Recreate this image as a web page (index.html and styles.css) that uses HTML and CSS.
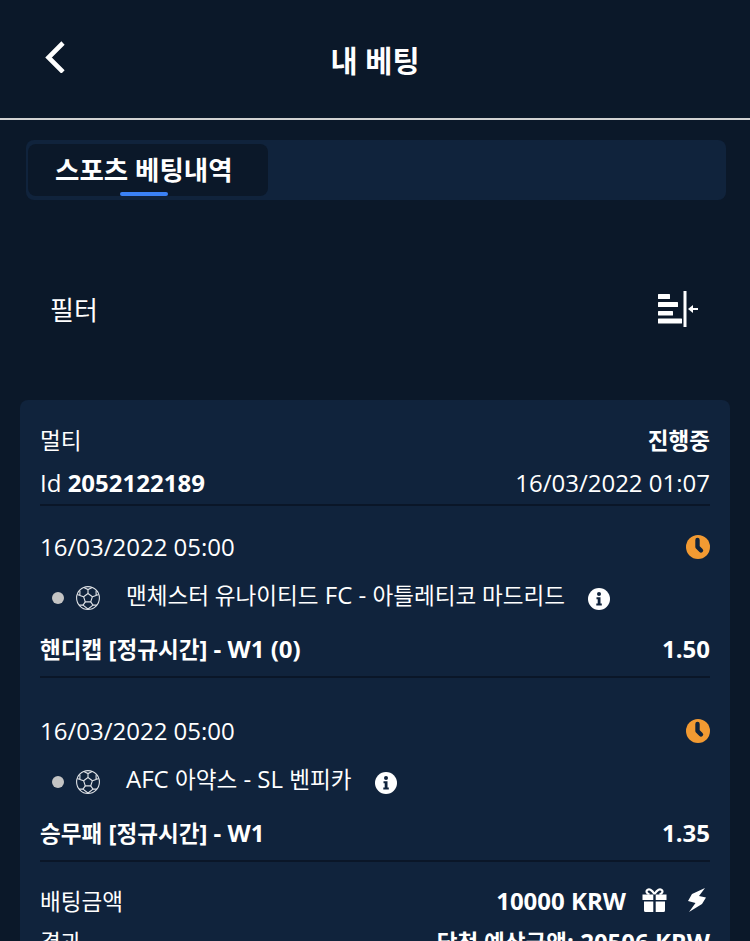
FILE: index.html
```html
<!DOCTYPE html>
<html lang="ko">

<head>
    <meta charset="UTF-8">
    <meta name="viewport" content="width=device-width, initial-scale=1.0">
    <title>내 베팅</title>
    <link rel="stylesheet" href="styles.css">
</head>

<body>
    <svg class="svg-defs" width="0" height="0">
        <symbol id="ball" viewBox="0 0 24 24">
            <g fill="none" stroke="#dfe2e6" stroke-width="1.100">
                <circle cx="12" cy="12" r="11.400"/>
                <path d="M12 7.500l4.400 3.200-1.700 5.200H9.300l-1.700-5.200z"/>
                <path d="M12 7.500V3.600M16.400 10.700l3.700-1.200M14.700 15.900l2.300 3.200M9.300 15.900L7 19.100M7.600 10.700L3.900 9.500"/>
                <path d="M7.800 1.600L12 3.600l4.200-2M20.100 9.500l2.600-.9M20.100 4.600v4.900M17 19.100l-4.900 3.900M17 19.100h4M7 19.100l4.900 3.900M7 19.100H3M3.900 9.500V4.600M3.900 9.500l-2.600-.9"/>
            </g>
        </symbol>
        <symbol id="clock" viewBox="0 0 24 24">
            <circle cx="12" cy="12" r="12" fill="#f29a32"/>
            <path d="M11.500 5v7l3.500 3.500" fill="none" stroke="#10233c" stroke-width="4.400" stroke-linecap="round" stroke-linejoin="round"/>
        </symbol>
        <symbol id="info" viewBox="0 0 22 22">
            <circle cx="11" cy="11" r="11" fill="#fff"/>
            <circle cx="11" cy="6" r="2" fill="#10233c"/>
            <path d="M8.500 9.200h4v6.200h1.300v2H8.300v-2h1.400v-4.200H8.500z" fill="#10233c"/>
        </symbol>
    </svg>

    <header class="topbar">
        <svg class="back-icon" viewBox="0 0 20 32" width="20" height="32">
            <path d="M18 2L3.500 16.500 18 31" fill="none" stroke="#fff" stroke-width="4.600"/>
        </svg>
        <h1 class="page-title">내 베팅</h1>
    </header>

    <div class="tabs">
        <div class="tab active">스포츠 베팅내역</div>
    </div>

    <div class="filter-row">
        <span>필터</span>
        <svg class="filter-icon" viewBox="0 0 40 36" width="40" height="36">
            <g fill="#fff">
                <rect x="0" y="3" width="12" height="5" rx="0.500"/>
                <rect x="0" y="11" width="20" height="5" rx="0.500"/>
                <rect x="0" y="20" width="15" height="4.500" rx="0.500"/>
                <rect x="0" y="27.500" width="24" height="5" rx="0.500"/>
                <rect x="25.500" y="0" width="3" height="36"/>
                <rect x="33" y="17" width="7" height="2"/>
                <path d="M30 18l5-4v8z"/>
            </g>
        </svg>
    </div>

    <section class="bet-card">
        <div class="row row-type">
            <span class="ko">멀티</span>
            <b class="ko">진행중</b>
        </div>
        <div class="row row-id">
            <span>Id <b>2052122189</b></span>
            <span>16/03/2022 01:07</span>
        </div>

        <div class="event">
            <div class="row event-date">
                <span>16/03/2022 05:00</span>
                <svg class="clock-icon"><use href="#clock"/></svg>
            </div>
            <div class="event-match">
                <i class="dot"></i>
                <svg class="ball-icon"><use href="#ball"/></svg>
                <span class="match-name"><span class="ko">맨체스터 유나이티드</span> FC - <span class="ko">아틀레티코 마드리드</span></span>
                <svg class="info-icon"><use href="#info"/></svg>
            </div>
            <div class="row event-market">
                <b><span class="ko">핸디캡</span> [<span class="ko">정규시간</span>] - W1 (0)</b>
                <b>1.50</b>
            </div>
        </div>

        <div class="event">
            <div class="row event-date">
                <span>16/03/2022 05:00</span>
                <svg class="clock-icon"><use href="#clock"/></svg>
            </div>
            <div class="event-match">
                <i class="dot"></i>
                <svg class="ball-icon"><use href="#ball"/></svg>
                <span class="match-name">AFC <span class="ko">아약스</span> - SL <span class="ko">벤피카</span></span>
                <svg class="info-icon"><use href="#info"/></svg>
            </div>
            <div class="row event-market">
                <b><span class="ko">승무패</span> [<span class="ko">정규시간</span>] - W1</b>
                <b>1.35</b>
            </div>
        </div>

        <div class="row row-stake">
            <span class="ko">배팅금액</span>
            <span class="stake-value">
                <b>10000 KRW</b>
                <svg class="gift-icon" viewBox="0 0 24 24" width="25" height="24">
                    <path fill="#fff" d="M0 6.500h10.800V12H0zM13.200 6.500H24V12H13.200zM1.500 13.500h9.300V24H3a1.500 1.500 0 0 1-1.500-1.500zM13.200 13.500h9.300v9A1.500 1.500 0 0 1 21 24h-7.800z"/>
                    <path fill="none" stroke="#fff" stroke-width="2.200" d="M12 6C9 1 6.500 0.800 5 1.800 3.300 3 4 6 7 6M12 6c3-5 5.500-5.200 7-4.200 1.700 1.200 1 4.200-2 4.200"/>
                </svg>
                <svg class="bolt-icon" viewBox="0 0 18 24" width="18" height="24">
                    <path fill="#fff" d="M17 0L4 6 0 13l7.500 2L1 24l13-8 4-6.500L11 8z"/>
                </svg>
            </span>
        </div>
        <div class="row row-result">
            <span class="ko">결과</span>
            <b><span class="ko">당첨 예상금액</span>: 20506 KRW</b>
        </div>
    </section>
</body>
</html>
```

FILE: styles.css
```css
* {
    box-sizing: border-box;
}

body {
    margin: 0;
    height: 941px;
    overflow: hidden;
    background-color: #0b1829;
    color: #fff;
    font-family: "Open Sans", "Noto Sans CJK KR", sans-serif;
    font-size: 24px;
}

b {
    font-weight: 700;
}

/* hangul in the original runs narrower than Noto, so it gets scaled down */
.ko {
    font-size: 0.94em;
}

.svg-defs {
    display: block;
    height: 0;
}

.topbar {
    display: flex;
    align-items: center;
    justify-content: center;
    position: relative;
    height: 120px;
    border-bottom: 2px solid #d2d2d2;
}

.page-title {
    margin: 0;
    font-size: 29.5px;
    font-weight: 700;
}

.back-icon {
    position: absolute;
    left: 45px;
    top: 41px;
}

.tabs {
    margin: 20px 24px 0 26px;
    height: 60px;
    padding: 4px 2px;
    background-color: #10233c;
    border-radius: 8px;
}

.tab {
    position: relative;
    width: 240px;
    height: 52px;
    padding-left: 27px;
    line-height: 52px;
    font-size: 26.500px;
    font-weight: 700;
}

.tab.active {
    background-color: #0b1829;
    border-radius: 8px;
}

.tab.active::after {
    content: "";
    position: absolute;
    left: 92px;
    bottom: 0;
    width: 48px;
    height: 4px;
    border-radius: 2px;
    background-color: #3b82f6;
}

.filter-row {
    display: flex;
    justify-content: space-between;
    align-items: center;
    height: 200px;
    padding: 17px 52px 0 50px;
    font-size: 26px;
}

.bet-card {
    margin: 0 20px;
    padding: 20px 20px 0;
    background-color: #10233c;
    border-radius: 8px;
}

.row {
    display: flex;
    justify-content: space-between;
    align-items: center;
}

.row-type {
    height: 39px;
}

.row-id {
    height: 47px;
    padding-top: 2px;
    border-bottom: 2px solid #0a1628;
}

.event {
    padding: 22px 0 12px;
    border-bottom: 2px solid #0a1628;
}

.event + .event {
    padding-top: 34px;
}

.event-date {
    height: 36px;
}

.clock-icon {
    width: 24px;
    height: 24px;
    margin-top: 1px;
}

.event-match {
    display: flex;
    align-items: center;
    height: 32px;
    margin-top: 14px;
    padding-left: 12px;
}

.dot {
    width: 12px;
    height: 12px;
    margin-top: 8px;
    border-radius: 50%;
    background-color: #c4c4c4;
}

.ball-icon {
    width: 24px;
    height: 24px;
    margin: 7px 0 0 12px;
}

.match-name {
    margin-left: 26px;
}

.info-icon {
    width: 22px;
    height: 22px;
    margin: 10px 0 0 23px;
}

.event-market {
    height: 32px;
    margin-top: 22px;
}

.row-stake {
    height: 36px;
    margin-top: 20px;
}

.stake-value {
    display: flex;
    align-items: center;
}

.gift-icon {
    margin-left: 16px;
}

.bolt-icon {
    margin: 0 4px 0 21px;
}

.row-result {
    height: 46px;
}
```
